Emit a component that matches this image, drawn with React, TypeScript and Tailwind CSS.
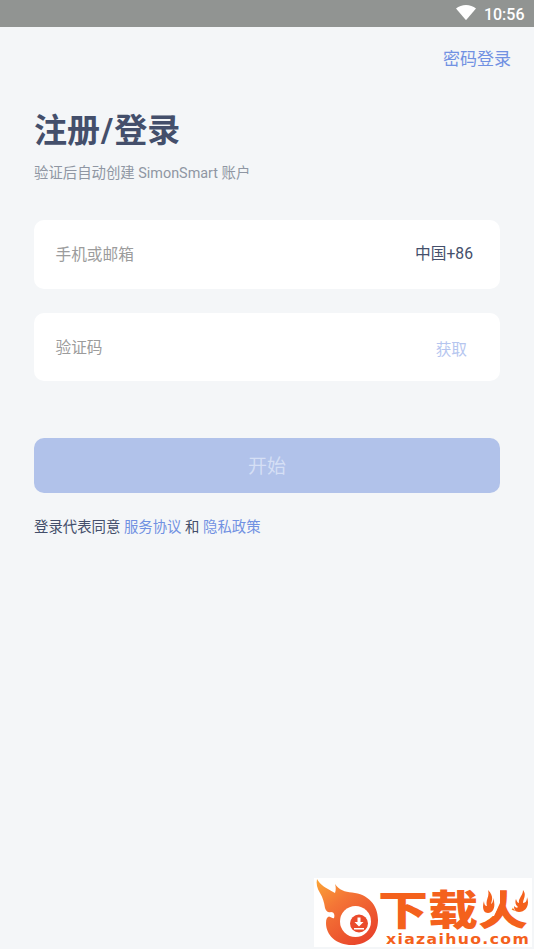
const StatusBar = () => {
    return (
        <div className="h-[27px] w-full shrink-0 bg-[#919492] flex items-center justify-end pr-[9.500px] gap-x-2 text-white">
            <svg className="w-5 h-[15px] -mt-0.5" viewBox="0 0 20 15" fill="currentColor">
                <path d="M0 3.5C2.8 1.2 6.2 0 10 0s7.200 1.200 10 3.500L10.600 14.600a.8.8 0 0 1-1.200 0Z" />
            </svg>
            <span className="text-base leading-[27px] font-medium pt-px">10:56</span>
        </div>
    );
};

const Watermark = () => {
    return (
        <div className="relative w-[218px] h-[69px] bg-white text-[#f4611c]">
            <svg className="absolute left-0 top-0 w-[66px] h-[69px]" viewBox="0 0 66 69">
                <defs>
                    <linearGradient id="flame" x1="0" y1="0" x2="0.7" y2="1">
                        <stop offset="0" stopColor="#fba536" />
                        <stop offset="0.400" stopColor="#f47536" />
                        <stop offset="1" stopColor="#e9452b" />
                    </linearGradient>
                </defs>
                <path
                    fill="url(#flame)"
                    d="M3 1C6 7 12 10 21 15C22 12 22 9 21 6C25 12 31 14 38 14.500C54 16 64 27 64 42C64 57 53 67 38 67C22 67 12 57 12 45C12 41 13 39 15 38.500C17 39 19 41 20 40C21 37 20 34 17 34C14 35 12 33 11 30C10 24 9 20 6 15C3 10 2 6 3 1Z"
                />
                <circle cx="41.500" cy="43.500" r="15.500" fill="white" />
                <circle cx="45" cy="45.500" r="9" fill="#ea4a2b" />
                <path fill="white" d="M43.500 39.500h3v4.500h3l-4.500 4.500-4.500-4.500h3ZM40 50h10v1.500h-10Z" />
            </svg>
            <div
                className="absolute left-[64px] top-[11.500px] h-[42px] text-[50px] leading-[42px] font-black whitespace-nowrap origin-top scale-y-[0.82]"
                style={{ fontFamily: '"Noto Sans CJK SC", sans-serif' }}
            >
                下载火
            </div>
            {/* the side strokes of the last character are small flames */}
            <svg className="absolute left-[166px] top-[10px] w-[50px] h-[28px]" viewBox="0 0 50 28">
                <path fill="white" d="M1 0H20V15L14 28H1ZM30 0H50V27H38L30 16Z" />
                <path
                    fill="currentColor"
                    d="M8 2C14 8 12 12 11 16C13 15 13 13 13 10C16 17 14 25 8 25C3 25 2 19 4 13C4 16 5 18 7 18C5 12 10 9 8 2ZM43 2C47 7 43 11 43 15C46 15 47 12 47 9C50 17 46 24 39 24C35 24 34 21 34 18C36 20 37 20 38 19C35 17 35 13 36 11C37 14 38 15 39 15C38 10 43 8 43 2Z"
                />
            </svg>
            <div className="absolute left-[72px] top-[54px] text-[14px] leading-[15px] font-bold tracking-[1.200px] origin-left scale-x-[1.120] font-['DejaVu_Sans',sans-serif]">
                xiazaihuo.com
            </div>
        </div>
    );
};

const App = () => {
    return (
        <div
            className="w-full h-screen bg-[#f4f6f8] flex flex-col overflow-hidden text-[#444f6b]"
            style={{ fontFamily: 'Roboto, "Noto Sans CJK SC", sans-serif' }}
        >
            <StatusBar />

            <div className="flex justify-end pr-[23px] pt-[19px]">
                <a className="text-[17px] leading-[26px] text-[#7191e2]">密码登录</a>
            </div>

            <div className="px-[34px] flex flex-col">
                <h1 className="mt-[35px] text-[33px] leading-[48px] font-bold">
                    注册<span className="mx-px">/</span>登录
                </h1>
                <p className="mt-[8px] text-[14.400px] leading-[22px] text-[#8f96a3]">验证后自动创建 SimonSmart 账户</p>

                <div className="mt-[35px] h-[69px] rounded-[10px] bg-white flex items-center justify-between pl-[21.500px] pr-[27px]">
                    <span className="pt-px text-[15.700px] text-[#9c9c9c]">手机或邮箱</span>
                    <span className="-mt-px text-[15.700px]">中国+86</span>
                </div>

                <div className="mt-[24px] h-[68px] rounded-[10px] bg-white flex items-center justify-between pl-[21.500px] pr-[33px]">
                    <span className="pt-[2px] text-[15.700px] text-[#9c9c9c]">验证码</span>
                    <span className="text-[15.700px] text-[#b6c6ef] pt-[5px]">获取</span>
                </div>

                <button
                    type="button"
                    className="mt-[57px] h-[55px] rounded-[10px] bg-[#b1c2ea] pt-1 text-[19px] text-[#d5dff5]"
                >
                    开始
                </button>

                <p className="mt-[24px] text-[14.400px] leading-[22px]">
                    登录代表同意 <a className="text-[#7191e2]">服务协议</a> 和 <a className="text-[#7191e2]">隐私政策</a>
                </p>
            </div>

            <div className="mt-auto flex justify-end pr-0.5 pb-0.5">
                <Watermark />
            </div>
        </div>
    );
};

export default App;
